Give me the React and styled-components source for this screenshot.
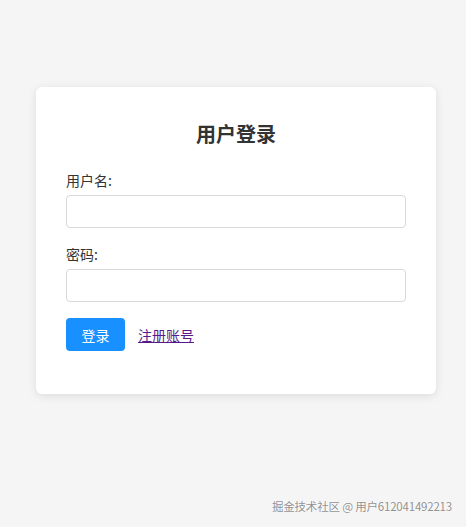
import React from 'react'
import styled, { createGlobalStyle } from 'styled-components'

const GlobalStyle = createGlobalStyle`
    html, body {
        margin: 0;
        padding: 0;
        background: #f5f5f5;
        font-family: "Noto Sans CJK SC", "Noto Sans", sans-serif;
        color: #333;
    }
`

const Page = styled.div`
    position: relative;
    height: 527px;
    box-sizing: border-box;
    padding: 87px 0 0 36px;
`

const Card = styled.div`
    width: 400px;
    box-sizing: border-box;
    padding: 30px;
    background: #fff;
    border-radius: 6px;
    box-shadow: 0 2px 10px rgba(0, 0, 0, 0.1);
`

const Title = styled.h2`
    margin: 0 0 19px;
    font-size: 20px;
    line-height: 34px;
    font-weight: 700;
    text-align: center;
    color: #333;
`

const Group = styled.div`
    margin-bottom: 16px;
    display: flex;
    flex-direction: column;
    gap: 5px;
`

const Label = styled.label`
    font-size: 14px;
    line-height: 20px;
    color: #333;
`

const Input = styled.input`
    height: 33px;
    box-sizing: border-box;
    padding: 6px 10px;
    border: 1px solid #d9d9d9;
    border-radius: 4px;
    font-size: 14px;
    outline: none;
`

const Actions = styled.div`
    display: flex;
    align-items: center;
    gap: 13px;
    margin-bottom: 13px;
`

const Button = styled.button`
    height: 33px;
    width: 59px;
    padding: 0;
    border: none;
    border-radius: 4px;
    background: #1890ff;
    color: #fff;
    font-family: inherit;
    font-size: 14px;
    cursor: pointer;
`

const Link = styled.a`
    font-size: 14px;
    color: #551a8b;
    text-decoration: underline;
`

const Watermark = styled.div`
    position: absolute;
    right: 14px;
    bottom: 13px;
    font-size: 11.5px;
    letter-spacing: -0.2px;
    color: rgba(125, 125, 125, 0.85);
    text-shadow: 0 0 2px rgba(255, 255, 255, 0.9);
`

export default function App() {
    return (
        <Page>
            <GlobalStyle />
            <Card>
                <Title>用户登录</Title>
                <Group>
                    <Label>用户名:</Label>
                    <Input type="text" />
                </Group>
                <Group>
                    <Label>密码:</Label>
                    <Input type="password" />
                </Group>
                <Actions>
                    <Button>登录</Button>
                    <Link href="#register">注册账号</Link>
                </Actions>
            </Card>
            <Watermark>掘金技术社区 @ 用户612041492213</Watermark>
        </Page>
    )
}
